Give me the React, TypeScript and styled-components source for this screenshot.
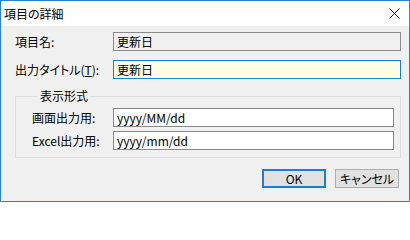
import styled, { createGlobalStyle } from "styled-components";

const GlobalStyle = createGlobalStyle`
    html, body {
        margin: 0;
        padding: 0;
        background: #ffffff;
    }
    body {
        font-family: "Noto Sans CJK JP", "Noto Sans", sans-serif;
        font-size: 12px;
        color: #000000;
        font-feature-settings: "palt";
    }
`;

const Window = styled.div`
    box-sizing: border-box;
    width: 410px;
    height: 202px;
    border: 1px solid #2a84d2;
    display: flex;
    flex-direction: column;
    background: #f0f0f0;
`;

const TitleBar = styled.div`
    height: 25px;
    flex: none;
    background: #ffffff;
    display: flex;
    align-items: center;
    justify-content: space-between;
    padding: 0 9px 0 3px;
`;

const TitleText = styled.span`
    font-size: 12px;
    line-height: 14px;
`;

const CloseButton = styled.div`
    width: 12px;
    height: 12px;
    display: flex;
    align-items: center;
    justify-content: center;
`;

const Body = styled.div`
    flex: 1;
    display: flex;
    flex-direction: column;
    padding: 6px 8px 0 14px;
`;

const Row = styled.div<{ $labelWidth: number; $gap?: number }>`
    display: grid;
    grid-template-columns: ${(p) => p.$labelWidth}px 1fr;
    align-items: center;
    height: 19px;
    margin-top: ${(p) => p.$gap ?? 0}px;
`;

const Label = styled.label`
    white-space: nowrap;
    line-height: 14px;
`;

type FieldVariant = "readonly" | "focused" | "normal";

const Field = styled.div<{ $variant: FieldVariant }>`
    box-sizing: border-box;
    height: 19px;
    display: flex;
    align-items: center;
    padding: 0 3px;
    white-space: nowrap;
    border: 1px solid
        ${(p) => (p.$variant === "focused" ? "#1c7fd6" : "#8a8a8a")};
    background: ${(p) =>
        p.$variant === "readonly"
            ? "#f0f0f0"
            : p.$variant === "focused"
            ? "#fffde6"
            : "#ffffff"};
`;

const Group = styled.fieldset`
    margin: 10px 0 0 0;
    padding: 5px 6px 7px 16px;
    border: 1px solid #dcdcdc;
    min-width: 0;
`;

const Legend = styled.legend`
    margin-left: 6px;
    padding: 0 2px;
    line-height: 14px;
`;

const ButtonBar = styled.div`
    display: flex;
    justify-content: flex-end;
    gap: 9px;
    margin-top: 11px;
    padding-right: 2px;
`;

const Button = styled.button<{ $default?: boolean }>`
    box-sizing: border-box;
    width: 64px;
    height: 19px;
    padding: 0;
    font: inherit;
    font-size: 12px;
    color: #000000;
    background: #e1e1e1;
    border: ${(p) => (p.$default ? "2px solid #1c7fd6" : "1px solid #adadad")};
    display: flex;
    align-items: center;
    justify-content: center;
`;

function App() {
    return (
        <>
            <GlobalStyle />
            <Window>
                <TitleBar>
                    <TitleText>項目の詳細</TitleText>
                    <CloseButton>
                        <svg width="11" height="11" viewBox="0 0 11 11">
                            <path
                                d="M0.5 0.5 L10.5 10.5 M10.5 0.5 L0.5 10.5"
                                stroke="#111111"
                                strokeWidth="1"
                                fill="none"
                            />
                        </svg>
                    </CloseButton>
                </TitleBar>
                <Body>
                    <Row $labelWidth={98}>
                        <Label>項目名:</Label>
                        <Field $variant="readonly">更新日</Field>
                    </Row>
                    <Row $labelWidth={98} $gap={9}>
                        <Label>
                            出力タイトル(<u>T</u>):
                        </Label>
                        <Field $variant="focused">更新日</Field>
                    </Row>
                    <Group>
                        <Legend>表示形式</Legend>
                        <Row $labelWidth={81}>
                            <Label>画面出力用:</Label>
                            <Field $variant="normal">yyyy/MM/dd</Field>
                        </Row>
                        <Row $labelWidth={81} $gap={4}>
                            <Label>Excel出力用:</Label>
                            <Field $variant="normal">yyyy/mm/dd</Field>
                        </Row>
                    </Group>
                    <ButtonBar>
                        <Button $default>OK</Button>
                        <Button>キャンセル</Button>
                    </ButtonBar>
                </Body>
            </Window>
        </>
    );
}

export default App;
